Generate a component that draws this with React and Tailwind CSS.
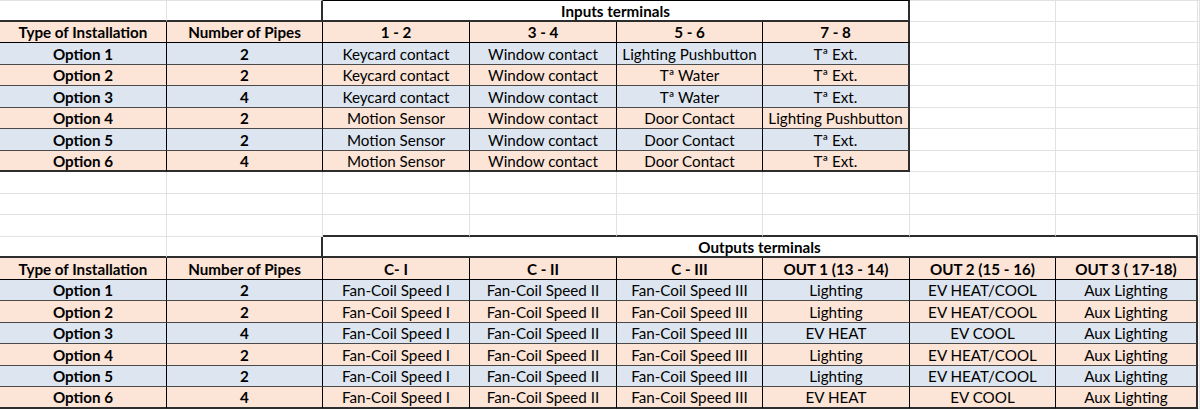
import React from 'react';

const tables = [
  {
    top: 0,
    lastCol: 5,
    title: 'Inputs terminals',
    span: 'col-span-4',
    header: ['Type of Installation', 'Number of Pipes', '1 - 2', '3 - 4', '5 - 6', '7 - 8'],
    rows: [
      ['Option 1', '2', 'Keycard contact', 'Window contact', 'Lighting Pushbutton', 'Tª Ext.'],
      ['Option 2', '2', 'Keycard contact', 'Window contact', 'Tª Water', 'Tª Ext.'],
      ['Option 3', '4', 'Keycard contact', 'Window contact', 'Tª Water', 'Tª Ext.'],
      ['Option 4', '2', 'Motion Sensor', 'Window contact', 'Door Contact', 'Lighting Pushbutton'],
      ['Option 5', '2', 'Motion Sensor', 'Window contact', 'Door Contact', 'Tª Ext.'],
      ['Option 6', '4', 'Motion Sensor', 'Window contact', 'Door Contact', 'Tª Ext.'],
    ],
  },
  {
    top: 11,
    lastCol: 7,
    title: 'Outputs terminals',
    span: 'col-span-6',
    header: ['Type of Installation', 'Number of Pipes', 'C- I', 'C - II', 'C - III', 'OUT 1 (13 - 14)', 'OUT 2 (15 - 16)', 'OUT 3 ( 17-18)'],
    rows: [
      ['Option 1', '2', 'Fan-Coil Speed I', 'Fan-Coil Speed II', 'Fan-Coil Speed III', 'Lighting', 'EV HEAT/COOL', 'Aux Lighting'],
      ['Option 2', '2', 'Fan-Coil Speed I', 'Fan-Coil Speed II', 'Fan-Coil Speed III', 'Lighting', 'EV HEAT/COOL', 'Aux Lighting'],
      ['Option 3', '4', 'Fan-Coil Speed I', 'Fan-Coil Speed II', 'Fan-Coil Speed III', 'EV HEAT', 'EV COOL', 'Aux Lighting'],
      ['Option 4', '2', 'Fan-Coil Speed I', 'Fan-Coil Speed II', 'Fan-Coil Speed III', 'Lighting', 'EV HEAT/COOL', 'Aux Lighting'],
      ['Option 5', '2', 'Fan-Coil Speed I', 'Fan-Coil Speed II', 'Fan-Coil Speed III', 'Lighting', 'EV HEAT/COOL', 'Aux Lighting'],
      ['Option 6', '4', 'Fan-Coil Speed I', 'Fan-Coil Speed II', 'Fan-Coil Speed III', 'EV HEAT', 'EV COOL', 'Aux Lighting'],
    ],
  },
];

const ROWS = 19;
const COLS = 9;

// which table (and which part of it) a cell belongs to
const cellInfo = (r, c) => {
  for (const t of tables) {
    if (r === t.top && c >= 2 && c <= t.lastCol) return { t, kind: 'title' };
    if (r === t.top + 1 && c <= t.lastCol) return { t, kind: 'header' };
    if (r > t.top + 1 && r <= t.top + 7 && c <= t.lastCol) return { t, kind: 'data', i: r - t.top - 2 };
  }
  return null;
};

const rightBorder = (r, c, lastInRow) => {
  const me = cellInfo(r, c);
  const next = cellInfo(r, lastInRow + 1);
  if (me && lastInRow === me.t.lastCol) return 'border-r-2 border-r-[#2d2d2d]';
  if (me) return 'border-r border-r-black';
  if (next && next.kind === 'title') return 'border-r-2 border-r-[#2d2d2d]';
  if (next) return 'border-r border-r-black';
  return 'border-r border-r-[#e2e2e2]';
};

const bottomBorder = (r, c) => {
  const me = cellInfo(r, c);
  const below = r + 1 < ROWS ? cellInfo(r + 1, c) : null;
  if (me && me.kind === 'data' && me.i === 5) return 'border-b-2 border-b-[#2d2d2d]';
  if (me && me.kind === 'title') return 'border-b-2 border-b-[#2d2d2d]';
  if (me && me.kind === 'header') return 'border-b border-b-black';
  if (me) return 'border-b border-b-[#4a4a4a]';
  if (below) return 'border-b-2 border-b-[#2d2d2d]';
  return 'border-b border-b-[#e2e2e2]';
};

const SheetCell = ({ r, c }) => {
  const info = cellInfo(r, c);
  let text = '';
  let bold = false;
  let bg = 'bg-white';
  let span = '';
  let last = c;

  if (info && info.kind === 'title') {
    text = info.t.title;
    bold = true;
    span = info.t.span;
    last = info.t.lastCol;
  } else if (info && info.kind === 'header') {
    text = info.t.header[c];
    bold = true;
    bg = 'bg-[#fce4d6]';
  } else if (info) {
    text = info.t.rows[info.i][c];
    bold = c < 2;
    bg = info.i % 2 === 0 ? 'bg-[#dde6f0]' : 'bg-[#fce4d6]';
  }

  const top = r === 0 ? (info ? 'border-t border-t-black' : 'border-t border-t-[#e2e2e2]') : '';

  return (
    <div
      className={`flex items-center justify-center overflow-hidden whitespace-nowrap pt-[2px] text-[15.2px] leading-none text-black ${bold ? 'font-bold' : 'font-normal'} ${bg} ${span} ${top} ${rightBorder(r, c, last)} ${bottomBorder(r, c)}`}
    >
      {text}
    </div>
  );
};

export default function App() {
  const cells = [];
  for (let r = 0; r < ROWS; r++) {
    for (let c = 0; c < COLS; c++) {
      const info = cellInfo(r, c);
      // skip cells covered by a merged title
      if (info && info.kind === 'title' && c !== 2) continue;
      cells.push(<SheetCell key={`${r}-${c}`} r={r} c={c} />);
    }
  }

  return (
    <div
      className="w-[1200px] h-[410px] bg-white overflow-hidden"
      style={{ fontFamily: 'Lato, "Open Sans", sans-serif' }}
    >
      <div className="grid grid-cols-[167px_156px_147px_147px_146px_147px_146px_142px_1fr] grid-rows-[22px_21px_22px_21px_22px_21px_22px_21px_22px_21px_22px_21px_22px_21px_22px_21px_22px_21px_22px]">
        {cells}
      </div>
    </div>
  );
}
